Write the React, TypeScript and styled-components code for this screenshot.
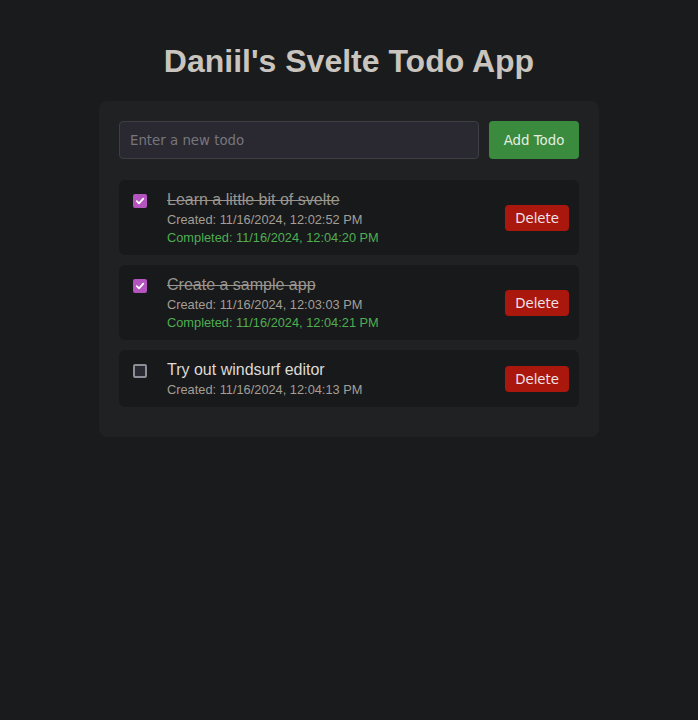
import React, { useState } from "react";
import styled, { createGlobalStyle } from "styled-components";

const Global = createGlobalStyle`
  html, body { background: #1a1b1d; }
  body { margin: 0; font-family: "Liberation Sans", Arial, sans-serif; }
`;

const Page = styled.main`
  display: flex;
  flex-direction: column;
  align-items: center;
  padding-top: 43px;
`;

const Title = styled.h1`
  margin: 0 0 21px;
  font-size: 32px;
  font-weight: 700;
  color: #c9c4bd;
  text-align: center;
`;

const Card = styled.section`
  width: 500px;
  box-sizing: border-box;
  background: #1f2123;
  border-radius: 8px;
  padding: 20px 20px 30px;
`;

const Form = styled.form`
  display: flex;
  gap: 10px;
  margin-bottom: 21px;
`;

const Input = styled.input`
  flex: 1;
  height: 38px;
  box-sizing: border-box;
  padding: 0 10px;
  background: #2a2931;
  border: 1px solid #3d3e44;
  border-radius: 4px;
  color: #ddd;
  font-family: "DejaVu Sans", sans-serif;
  font-size: 13.333px;
  outline: none;
  &::placeholder { color: #77767c; }
`;

const AddButton = styled.button`
  width: 90px;
  height: 38px;
  padding: 0;
  background: #3b8b3e;
  color: #e4efe2;
  border: none;
  border-radius: 4px;
  font-family: "DejaVu Sans", sans-serif;
  font-size: 13.333px;
  cursor: pointer;
`;

const List = styled.ul`
  list-style: none;
  margin: 0;
  padding: 0;
  display: flex;
  flex-direction: column;
  gap: 10px;
`;

const Item = styled.li`
  display: flex;
  align-items: center;
  justify-content: space-between;
  background: #18191b;
  border-radius: 6px;
  padding: 11px 10px 10px 14px;
`;

const Left = styled.div`
  display: flex;
  align-items: flex-start;
  gap: 20px;
`;

const Box = styled.span<{ $checked: boolean }>`
  flex: none;
  width: 14px;
  height: 14px;
  margin-top: 3px;
  box-sizing: border-box;
  border-radius: 2px;
  display: flex;
  align-items: center;
  justify-content: center;
  background: ${(p) => (p.$checked ? "#b354bf" : "#2a2a32")};
  border: ${(p) => (p.$checked ? "none" : "2px solid #8d8c97")};
  cursor: pointer;
`;

const Content = styled.div`
  display: flex;
  flex-direction: column;
`;

const Text = styled.span<{ $done: boolean }>`
  font-size: 16px;
  color: ${(p) => (p.$done ? "#9a958d" : "#dedad4")};
  text-decoration: ${(p) => (p.$done ? "line-through" : "none")};
`;

const Meta = styled.span<{ $green?: boolean }>`
  margin-top: 3px;
  font-size: 12.8px;
  color: ${(p) => (p.$green ? "#4fae52" : "#a39e96")};
`;

const DeleteButton = styled.button`
  height: 26px;
  padding: 0 10px;
  background: #aa170d;
  color: #ece4ea;
  border: none;
  border-radius: 4px;
  font-family: "DejaVu Sans", sans-serif;
  font-size: 13.333px;
  cursor: pointer;
`;

type Todo = { id: number; text: string; created: string; completed?: string };

const initial: Todo[] = [
  { id: 1, text: "Learn a little bit of svelte", created: "11/16/2024, 12:02:52 PM", completed: "11/16/2024, 12:04:20 PM" },
  { id: 2, text: "Create a sample app", created: "11/16/2024, 12:03:03 PM", completed: "11/16/2024, 12:04:21 PM" },
  { id: 3, text: "Try out windsurf editor", created: "11/16/2024, 12:04:13 PM" },
];

const Check = () => (
  <svg width="10" height="10" viewBox="0 0 10 10">
    <path d="M1.8 5.2 L4 7.3 L8.3 2.6" fill="none" stroke="#fff" strokeWidth="1.8" strokeLinecap="round" strokeLinejoin="round" />
  </svg>
);

export default function App() {
  const [todos, setTodos] = useState<Todo[]>(initial);
  const [value, setValue] = useState("");
  return (
    <>
      <Global />
      <Page>
        <Title>Daniil's Svelte Todo App</Title>
        <Card>
          <Form onSubmit={(e) => e.preventDefault()}>
            <Input placeholder="Enter a new todo" value={value} onChange={(e) => setValue(e.target.value)} />
            <AddButton type="submit">Add Todo</AddButton>
          </Form>
          <List>
            {todos.map((t) => (
              <Item key={t.id}>
                <Left>
                  <Box $checked={!!t.completed}>{t.completed && <Check />}</Box>
                  <Content>
                    <Text $done={!!t.completed}>{t.text}</Text>
                    <Meta>Created: {t.created}</Meta>
                    {t.completed && <Meta $green>Completed: {t.completed}</Meta>}
                  </Content>
                </Left>
                <DeleteButton onClick={() => setTodos(todos.filter((x) => x.id !== t.id))}>Delete</DeleteButton>
              </Item>
            ))}
          </List>
        </Card>
      </Page>
    </>
  );
}
